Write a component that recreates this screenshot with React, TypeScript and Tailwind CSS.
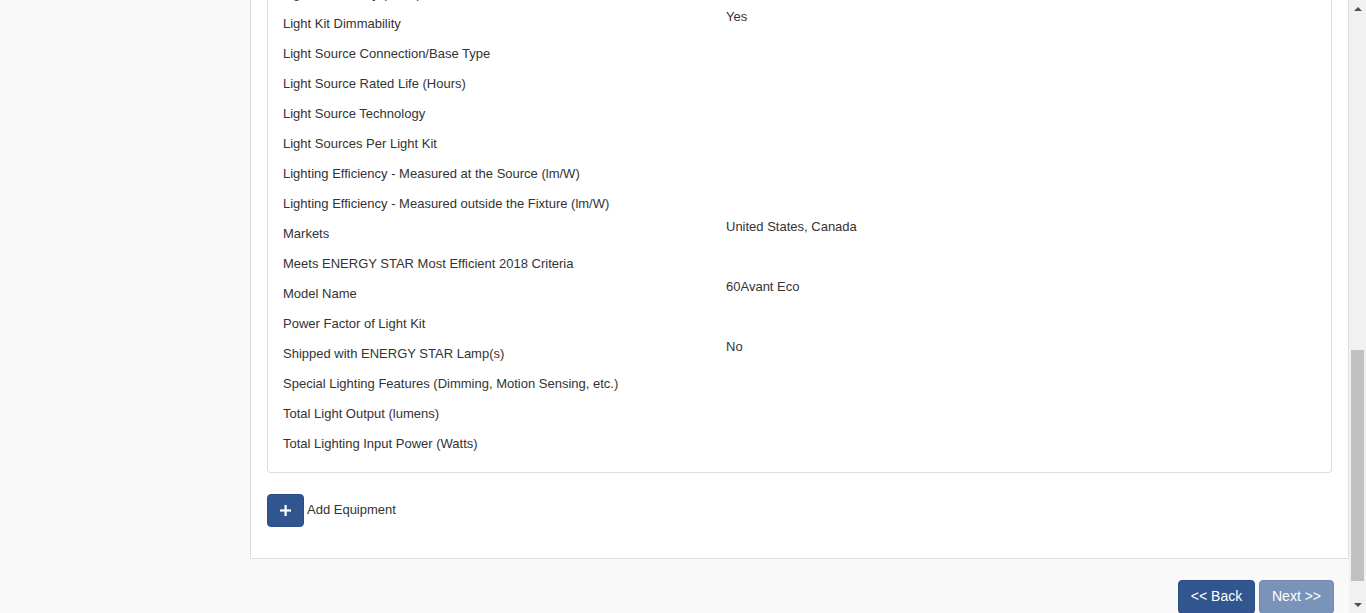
import React from "react";

const rows: [string, string][] = [
  ["Light Kit Efficacy (lm/W)", ""],
  ["Light Kit Dimmability", "Yes"],
  ["Light Source Connection/Base Type", ""],
  ["Light Source Rated Life (Hours)", ""],
  ["Light Source Technology", ""],
  ["Light Sources Per Light Kit", ""],
  ["Lighting Efficiency - Measured at the Source (lm/W)", ""],
  ["Lighting Efficiency - Measured outside the Fixture (lm/W)", ""],
  ["Markets", "United States, Canada"],
  ["Meets ENERGY STAR Most Efficient 2018 Criteria", ""],
  ["Model Name", "60Avant Eco"],
  ["Power Factor of Light Kit", ""],
  ["Shipped with ENERGY STAR Lamp(s)", "No"],
  ["Special Lighting Features (Dimming, Motion Sensing, etc.)", ""],
  ["Total Light Output (lumens)", ""],
  ["Total Lighting Input Power (Watts)", ""],
];

export default function App() {
  return (
    <div
      className="flex h-[613px] w-[1366px] overflow-hidden bg-[#f9f9f9] text-[13px] leading-[20px] text-[#333]"
      style={{ fontFamily: '"Liberation Sans", Arial, sans-serif' }}
    >
      <div className="flex w-[1349px] flex-col">
        <div className="ml-[250px] flex flex-col border-b border-l border-r border-[#dddddd] bg-white px-4 pb-[31px]">
          <div className="mt-[-24px] rounded-b-[4px] border-b border-l border-r border-[#dddddd] bg-white px-[15px] pb-[16px]">
            {rows.map(([label, value], i) => (
              <div key={i} className="flex h-[30px]">
                <div className="w-[443px] pt-[8px]">{label}</div>
                <div className="flex-1 pt-[1px]">{value}</div>
              </div>
            ))}
          </div>
          <div className="mt-[21px] flex items-center gap-[3px]">
            <button className="flex h-[33px] w-[37px] items-center justify-center rounded-[4px] border border-[#2a4d85] bg-[#30558f] text-white">
              <svg width="11" height="11" viewBox="0 0 11 11">
                <rect x="4.5" y="0" width="2.2" height="11" fill="white" />
                <rect x="0" y="4.4" width="11" height="2.2" fill="white" />
              </svg>
            </button>
            <span className="-mt-[1px]">Add Equipment</span>
          </div>
        </div>
        <div className="mt-[21px] flex justify-end gap-[4px] pr-[15px]">
          <button className="h-[34px] w-[77px] rounded-[4px] border border-[#2a4d85] bg-[#30558f] pb-[2px] text-[14px] text-white">
            &lt;&lt; Back
          </button>
          <button className="h-[34px] w-[75px] rounded-[4px] border border-[#6f8ab3] bg-[#7a93b9] pb-[2px] text-[14px] text-white">
            Next &gt;&gt;
          </button>
        </div>
      </div>
      <div className="flex w-[17px] flex-col items-center bg-[#f1f1f1]">
        <div className="flex h-[17px] w-full items-center justify-center">
          <div className="h-0 w-0 border-x-[4px] border-b-[4px] border-x-transparent border-b-[#505050]" />
        </div>
        <div className="mt-[333px] h-[231px] w-[13px] bg-[#c1c1c1]" />
        <div className="mt-auto flex h-[17px] w-full items-center justify-center">
          <div className="h-0 w-0 border-x-[4px] border-t-[4px] border-x-transparent border-t-[#505050]" />
        </div>
      </div>
    </div>
  );
}
